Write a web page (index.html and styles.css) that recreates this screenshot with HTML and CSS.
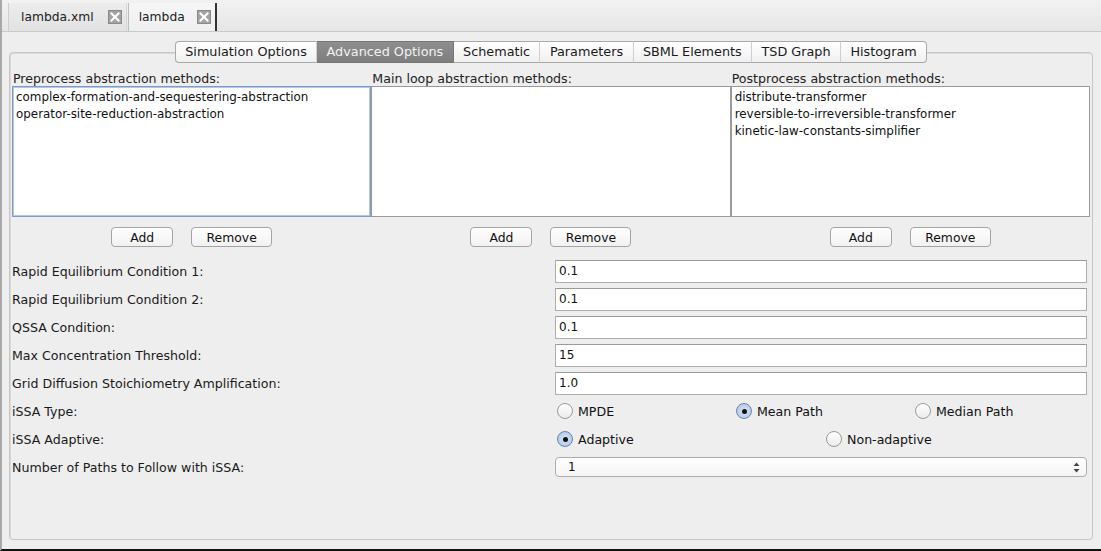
FILE: index.html
```html
<!DOCTYPE html>
<html>
<head>
<meta charset="utf-8">
<link rel="stylesheet" href="styles.css">
</head>
<body>
<div class="window">
  <div class="doc-tabs">
    <div class="doc-tab first"><span>lambda.xml</span><span class="close"></span></div>
    <div class="doc-tab active"><span>lambda</span><span class="close"></span></div>
  </div>
  <div class="content">
    <div class="pane">
      <div class="seg">
        <div class="seg-btn">Simulation Options</div>
        <div class="seg-btn selected">Advanced Options</div>
        <div class="seg-btn">Schematic</div>
        <div class="seg-btn">Parameters</div>
        <div class="seg-btn">SBML Elements</div>
        <div class="seg-btn">TSD Graph</div>
        <div class="seg-btn">Histogram</div>
      </div>
      <div class="lists">
        <div class="col">
          <div class="col-label">Preprocess abstraction methods:</div>
          <div class="listbox focused">
            <div>complex-formation-and-sequestering-abstraction</div>
            <div>operator-site-reduction-abstraction</div>
          </div>
          <div class="btns"><button class="btn add">Add</button><button class="btn rem">Remove</button></div>
        </div>
        <div class="col">
          <div class="col-label">Main loop abstraction methods:</div>
          <div class="listbox"></div>
          <div class="btns"><button class="btn add">Add</button><button class="btn rem">Remove</button></div>
        </div>
        <div class="col">
          <div class="col-label">Postprocess abstraction methods:</div>
          <div class="listbox">
            <div>distribute-transformer</div>
            <div>reversible-to-irreversible-transformer</div>
            <div>kinetic-law-constants-simplifier</div>
          </div>
          <div class="btns"><button class="btn add">Add</button><button class="btn rem">Remove</button></div>
        </div>
      </div>
      <div class="form">
        <div class="row"><div class="lbl">Rapid Equilibrium Condition 1:</div><div class="field">0.1</div></div>
        <div class="row"><div class="lbl">Rapid Equilibrium Condition 2:</div><div class="field">0.1</div></div>
        <div class="row"><div class="lbl">QSSA Condition:</div><div class="field">0.1</div></div>
        <div class="row"><div class="lbl">Max Concentration Threshold:</div><div class="field">15</div></div>
        <div class="row"><div class="lbl">Grid Diffusion Stoichiometry Amplification:</div><div class="field">1.0</div></div>
        <div class="row"><div class="lbl">iSSA Type:</div>
          <div class="radios three">
            <div class="radio"><span class="dot"></span>MPDE</div>
            <div class="radio"><span class="dot on"></span>Mean Path</div>
            <div class="radio"><span class="dot"></span>Median Path</div>
          </div>
        </div>
        <div class="row"><div class="lbl">iSSA Adaptive:</div>
          <div class="radios two">
            <div class="radio"><span class="dot on"></span>Adaptive</div>
            <div class="radio"><span class="dot"></span>Non-adaptive</div>
          </div>
        </div>
        <div class="row"><div class="lbl">Number of Paths to Follow with iSSA:</div>
          <div class="select"><span>1</span>
            <svg class="arrows" width="7" height="11" viewBox="0 0 7 11"><path d="M3.5 0.5 L6.5 4 L0.5 4 Z M0.5 7 L6.5 7 L3.5 10.5 Z" fill="#444"/></svg>
          </div>
        </div>
      </div>
    </div>
  </div>
</div>
</body>
</html>
```
FILE: styles.css
```css
* { box-sizing: border-box; }
html, body { margin: 0; padding: 0; }
body {
  width: 1101px; height: 551px; overflow: hidden;
  background: #eeeeee;
  font-family: "DejaVu Sans", sans-serif;
  font-size: 12px; color: #111;
}
.window {
  width: 1101px; height: 551px;
  border-left: 2px solid #a8a8a8;
  border-bottom: 2px solid #111;
  display: flex; flex-direction: column;
}
.doc-tabs {
  height: 32px;
  display: flex; align-items: flex-end;
  padding-left: 6px;
  background: linear-gradient(#f2f2f2, #e6e6e6);
  border-bottom: 1px solid #c9c9c9;
}
.doc-tab {
  height: 28px;
  display: flex; align-items: center; gap: 14px;
  padding: 0 4px 0 12px;
  font-size: 12.3px;
  color: #222;
  border-left: 1px solid #cfcfcf;
  background: linear-gradient(#ececec, #e2e2e2);
}
.doc-tab.first { margin-right: 1px; border-right: 1px solid #d6d6d6; }
.doc-tab.active {
  background: linear-gradient(#f6f6f6, #efefef);
  border-left: 1px solid #bdbdbd;
  border-right: 2px solid #333;
  padding-left: 10px;
  gap: 12px;
}
.close {
  width: 14px; height: 14px;
  background: #a3a3a3;
  border: 1px solid #8a8a8a;
  position: relative;
}
.close::before, .close::after {
  content: ""; position: absolute;
  left: 5px; top: 0px; width: 2px; height: 12px;
  background: #fff;
  transform: rotate(45deg);
}
.close::after { transform: rotate(-45deg); }
.content {
  flex: 1;
  padding: 20px 8px 9px 7px;
}
.pane {
  height: 100%;
  border: 1px solid #c6c6c6;
  border-radius: 4px;
  box-shadow: inset 1px 1px 0 #dadada;
  padding: 0 2px;
  display: flex; flex-direction: column;
}
.seg {
  display: flex; justify-content: center;
  margin-top: -12px;
}
.seg-btn {
  height: 22px; line-height: 20px;
  padding: 0 9.4px;
  font-size: 12.8px;
  color: #1a1a1a;
  background: linear-gradient(#ffffff, #f0f0f0);
  border-top: 1px solid #a9a9a9;
  border-bottom: 1px solid #a9a9a9;
  border-right: 1px solid #cfcfcf;
}
.seg-btn:first-child { border-left: 1px solid #a9a9a9; border-radius: 4px 0 0 4px; }
.seg-btn:last-child { border-right: 1px solid #a9a9a9; border-radius: 0 4px 4px 0; }
.seg-btn.selected {
  background: linear-gradient(#8e8e8e, #7e7e7e);
  color: #f2f2f2;
  border-color: #777;
}
.lists {
  display: flex;
  margin-top: 6px;
}
.col { flex: 1; display: flex; flex-direction: column; }
.col-label { height: 17px; padding-left: 1px; font-size: 12.6px; line-height: 20px; color: #222; white-space: nowrap; }
.listbox {
  height: 131px;
  background: #fff;
  border: 1px solid #9a9a9a;
  padding: 2px 3px;
  line-height: 17px;
  font-size: 11.9px;
}
.listbox.focused { border-color: #7d9bc4; box-shadow: inset 0 0 0 1px #b3c7e3; }
.btns { display: flex; justify-content: center; gap: 18px; margin-top: 10px; }
.btn {
  height: 20px; padding: 0;
  font-family: "DejaVu Sans", sans-serif;
  font-size: 12.4px; color: #111;
  background: linear-gradient(#ffffff, #f1f1f1);
  border: 1px solid #a4a4a4;
  border-radius: 4px;
}
.btn.add { width: 62px; }
.btn.rem { width: 81px; }
.form { display: flex; flex-direction: column; margin-top: 10px; padding-right: 3px; }
.row { height: 28px; display: flex; align-items: center; }
.lbl { width: 543px; flex-shrink: 0; font-size: 12.6px; color: #1a1a1a; white-space: nowrap; }
.field {
  flex: 1; height: 23px;
  background: #fff;
  border: 1px solid #adadad;
  border-top-color: #9a9a9a;
  padding: 0 3px; line-height: 21px;
  font-size: 12px;
}
.radios { flex: 1; display: flex; }
.radios.three .radio { width: 179px; }
.radios.two .radio { width: 269px; }
.radio { display: flex; align-items: center; gap: 5px; font-size: 12.6px; padding-left: 2px; }
.dot {
  width: 16px; height: 16px; border-radius: 50%;
  border: 1px solid #9a9a9a;
  background: linear-gradient(#ffffff, #ebebeb);
  display: flex; align-items: center; justify-content: center;
}
.dot.on {
  border-color: #6c85a6;
  background: radial-gradient(circle at 50% 50%, #d9e6f7, #a9c2e6);
}
.dot.on::after { content: ""; width: 5px; height: 5px; border-radius: 50%; background: #111; }
.select {
  flex: 1; height: 20px;
  background: linear-gradient(#ffffff, #f4f4f4);
  border: 1px solid #adadad;
  border-radius: 4px;
  display: flex; align-items: center; justify-content: space-between;
  padding: 0 6px 0 12px;
  font-size: 12px;
}
```
